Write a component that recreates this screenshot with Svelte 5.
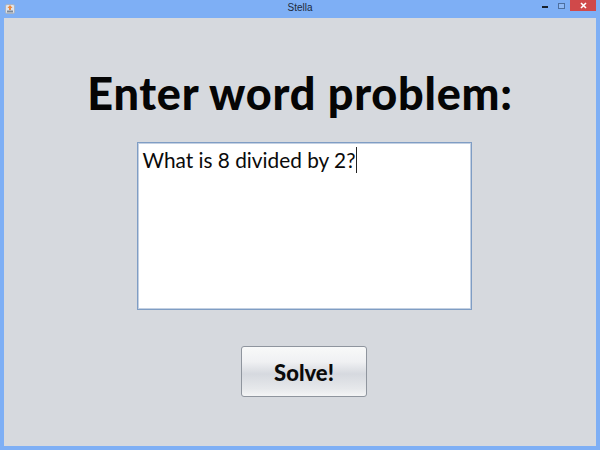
<script>
  let text = "What is 8 divided by 2?";
</script>

<main class="window">
  <header class="titlebar">
    <svg class="app-icon" width="10" height="10" viewBox="0 0 10 10">
      <rect x="0.5" y="0.5" width="9" height="9" rx="1.5" fill="#dfe3ea" stroke="#a9b4c4" />
      <path d="M5 1 L7.5 4 H6 V6 H4 V4 H2.5 Z" fill="#ee8a3c" />
      <rect x="2" y="6.5" width="6" height="2" fill="#7d8896" />
    </svg>
    <span class="title">Stella</span>
    <div class="controls">
      <span class="min"></span>
      <span class="max"></span>
      <span class="close">
        <svg width="7" height="7" viewBox="0 0 7 7">
          <path d="M1 1 L6 6 M6 1 L1 6" stroke="#fff" stroke-width="1.6" />
        </svg>
      </span>
    </div>
  </header>

  <section class="content">
    <h1>Enter word problem:</h1>
    <div class="textarea">
      <span>{text}</span><span class="caret"></span>
    </div>
    <button>Solve!</button>
  </section>
</main>

<style>
  :global(body) {
    margin: 0;
  }

  .window {
    width: 600px;
    height: 450px;
    box-sizing: border-box;
    display: flex;
    flex-direction: column;
    padding: 0 4px 4px;
    background: #7eaff5;
    font-family: "Comic Sans MS", "Lato", "Open Sans", sans-serif;
    overflow: hidden;
  }

  .titlebar {
    height: 18px;
    flex: none;
    display: flex;
    align-items: flex-start;
    position: relative;
  }

  .app-icon {
    margin: 4px 0 0 1px;
  }

  .title {
    position: absolute;
    left: 0;
    right: 0;
    top: 2px;
    text-align: center;
    font: 10px "Liberation Sans", sans-serif;
    color: #1c2a3c;
  }

  .controls {
    margin-left: auto;
    display: flex;
    align-items: flex-start;
  }

  .min {
    width: 6px;
    height: 2px;
    margin: 6px 10px 0 0;
    background: #17202c;
  }

  .max {
    width: 5px;
    height: 4px;
    margin: 3px 5px 0 0;
    border: 1px solid #4d6f9f;
    background: #8db8f5;
  }

  .close {
    width: 26px;
    height: 11px;
    display: flex;
    align-items: center;
    justify-content: center;
    background: #d0494a;
  }

  .content {
    flex: 1;
    display: flex;
    flex-direction: column;
    align-items: center;
    background: #d6d9de;
  }

  h1 {
    margin: 44px 0 0;
    height: 80px;
    font-size: 45px;
    line-height: 62px;
    font-weight: 900;
    color: #050505;
    letter-spacing: 0.75px;
    white-space: nowrap;
  }

  .textarea {
    width: 328px;
    height: 162px;
    margin-left: 8px;
    padding: 4px 0 0 5px;
    display: flex;
    align-items: flex-start;
    background: #fff;
    border: 1px solid #7f9dc4;
    box-shadow: inset 0 0 0 1px #c3d0e2;
    font-size: 20.8px;
    line-height: 26px;
    color: #0a0a0a;
    white-space: pre;
  }

  .caret {
    width: 1px;
    height: 26px;
    margin-left: 1px;
    background: #222;
  }

  button {
    width: 126px;
    height: 51px;
    margin: 36px 0 0 8px;
    padding: 2px 0 0;
    border: 1px solid #8f959e;
    border-radius: 3px;
    background: linear-gradient(#f8f9f9 0%, #f0f1f3 30%, #d6d9df 55%, #e6e8eb 85%, #f4f5f6 100%);
    font-family: inherit;
    font-size: 22px;
    font-weight: 900;
    color: #0a0a0a;
  }
</style>
